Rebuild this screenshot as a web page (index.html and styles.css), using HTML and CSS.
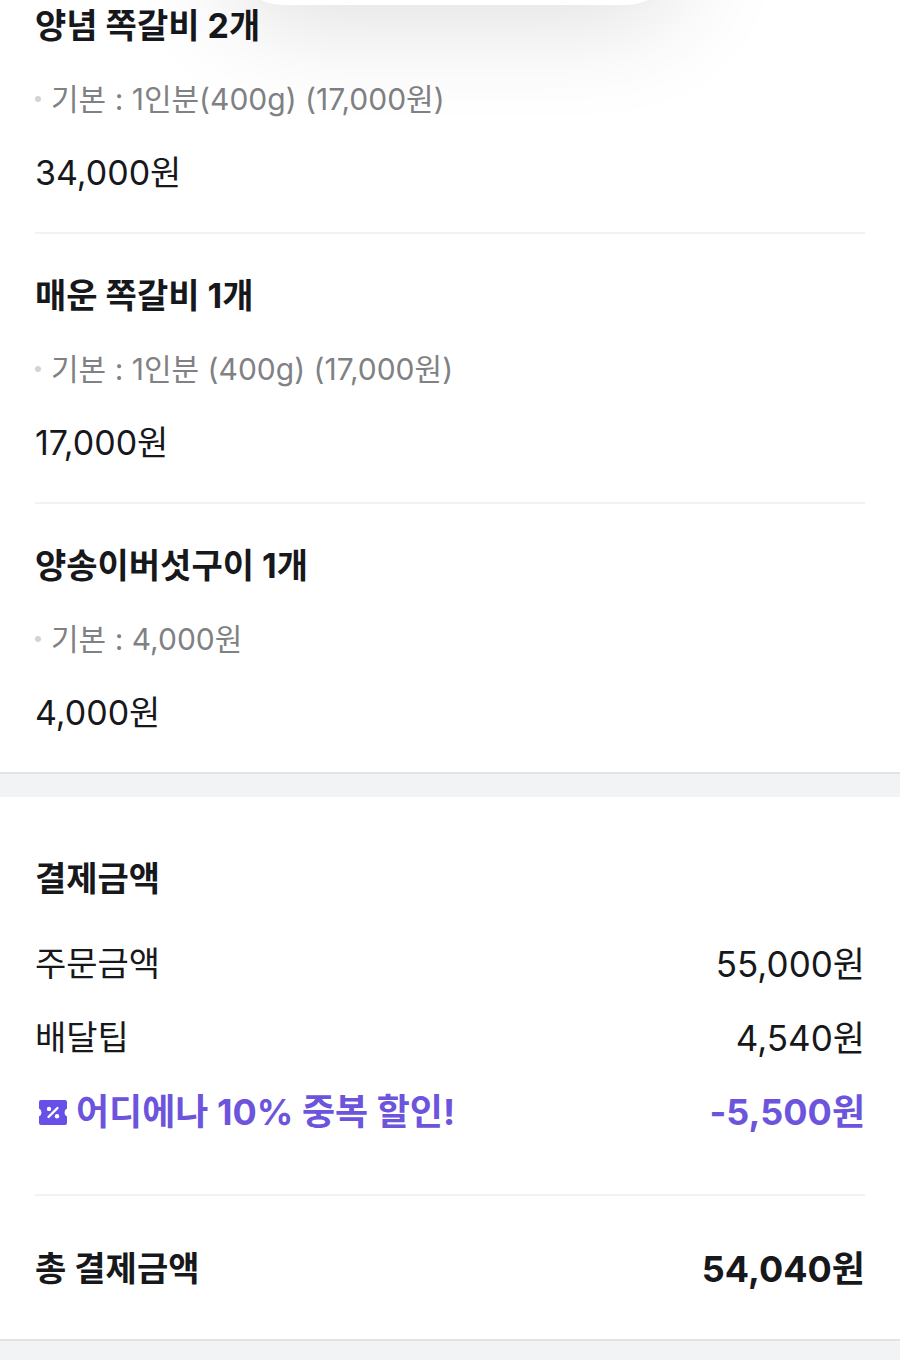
FILE: index.html
```html
<!DOCTYPE html>
<html lang="ko">
<head>
    <meta charset="UTF-8">
    <meta name="viewport" content="width=device-width, initial-scale=1">
    <title>주문내역</title>
    <link rel="stylesheet" href="styles.css">
</head>

<body>
    <div class="sheet"></div>

    <main>
        <ul class="menu-list">
            <li class="menu">
                <h2 class="title">양념 쪽갈비 2개</h2>
                <p class="option">기본 : 1인분(400g) (17,000원)</p>
                <p class="price">34,000원</p>
            </li>
            <li class="menu">
                <h2 class="title">매운 쪽갈비 1개</h2>
                <p class="option">기본 : 1인분 (400g) (17,000원)</p>
                <p class="price">17,000원</p>
            </li>
            <li class="menu">
                <h2 class="title">양송이버섯구이 1개</h2>
                <p class="option">기본 : 4,000원</p>
                <p class="price">4,000원</p>
            </li>
        </ul>

        <div class="divider"></div>

        <section class="payment">
            <h2 class="title">결제금액</h2>
            <dl class="rows">
                <div class="row">
                    <dt>주문금액</dt>
                    <dd>55,000원</dd>
                </div>
                <div class="row">
                    <dt>배달팁</dt>
                    <dd>4,540원</dd>
                </div>
                <div class="row discount">
                    <dt>
                        <svg class="coupon" viewBox="0 0 28 25" aria-hidden="true">
                            <path fill="#6650e8" d="M2 0H26Q28 0 28 2V8.500Q25.500 9.500 25.500 12.500Q25.500 15.500 28 16.500V23Q28 25 26 25H2Q0 25 0 23V16.500Q2.500 15.500 2.500 12.500Q2.500 9.500 0 8.500V2Q0 0 2 0Z"/>
                            <path stroke="#fff" stroke-width="2.400" stroke-linecap="round" d="M9.500 17L18.500 8"/>
                            <circle cx="10" cy="8.900" r="2.200" fill="#fff"/>
                            <circle cx="18" cy="16.300" r="2.200" fill="#fff"/>
                        </svg>
                        어디에나 10% 중복 할인!
                    </dt>
                    <dd>-5,500원</dd>
                </div>
            </dl>
            <dl class="total">
                <div class="row">
                    <dt>총 결제금액</dt>
                    <dd>54,040원</dd>
                </div>
            </dl>
        </section>
    </main>
</body>

</html>
```
FILE: styles.css
```css
*{
    box-sizing: border-box;
    margin: 0;
    padding: 0;
}
body{
    position: relative;
    min-height: 100vh;
    overflow-x: hidden;
    font-family: Inter, "Noto Sans CJK KR", sans-serif;
    font-size: 34px;
    line-height: 52px;
    color: #17181b;
    background-color: #f1f3f5;
}
main{
    background-color: #fff;
}

/* bottom edge of the floating panel */
.sheet{
    position: absolute;
    top: -115px;
    left: 25%;
    right: 24%;
    height: 120px;
    border-radius: 60px;
    background-color: #fff;
    box-shadow: 0 12px 110px rgba(0, 0, 0, 0.14);
}

.menu-list{
    padding: 0 35px;
    list-style: none;
}
.menu{
    padding: 36px 0 32px;
    border-bottom: 2px solid #f1f2f3;
}
.menu:first-child{
    padding-top: 0;
}
.menu:last-child{
    border-bottom: none;
}
.title{
    font-size: 34px;
    font-weight: bold;
}
.option{
    display: flex;
    align-items: center;
    gap: 10px;
    margin: 23px 0 24px;
    font-size: 30px;
    line-height: 48px;
    color: #808184;
}
.option::before{
    content: "";
    width: 6px;
    height: 6px;
    border-radius: 50%;
    background-color: #d2d3d5;
}
.price{
    padding-bottom: 1px;
}

.divider{
    height: 25px;
    border-top: 2px solid #e1e3e6;
    background-color: #f1f3f5;
}

.payment{
    padding: 56px 35px 44px;
    border-bottom: 2px solid #e1e3e6;
}
.rows{
    display: flex;
    flex-direction: column;
    gap: 22px;
    padding: 33px 0 56px;
    border-bottom: 2px solid #f1f2f3;
}
.row{
    display: flex;
    justify-content: space-between;
}
.row dt{
    display: flex;
    align-items: center;
    gap: 9px;
}
.row dd{
    font-size: 35px;
}
.row.discount{
    font-weight: bold;
    color: #6c55dc;
}
.discount dt,
.discount dd,
.total dd{
    font-size: 36px;
}
.coupon{
    width: 28px;
    height: 25px;
    margin-left: 4px;
}
.total{
    padding-top: 47px;
    font-weight: bold;
}
```
